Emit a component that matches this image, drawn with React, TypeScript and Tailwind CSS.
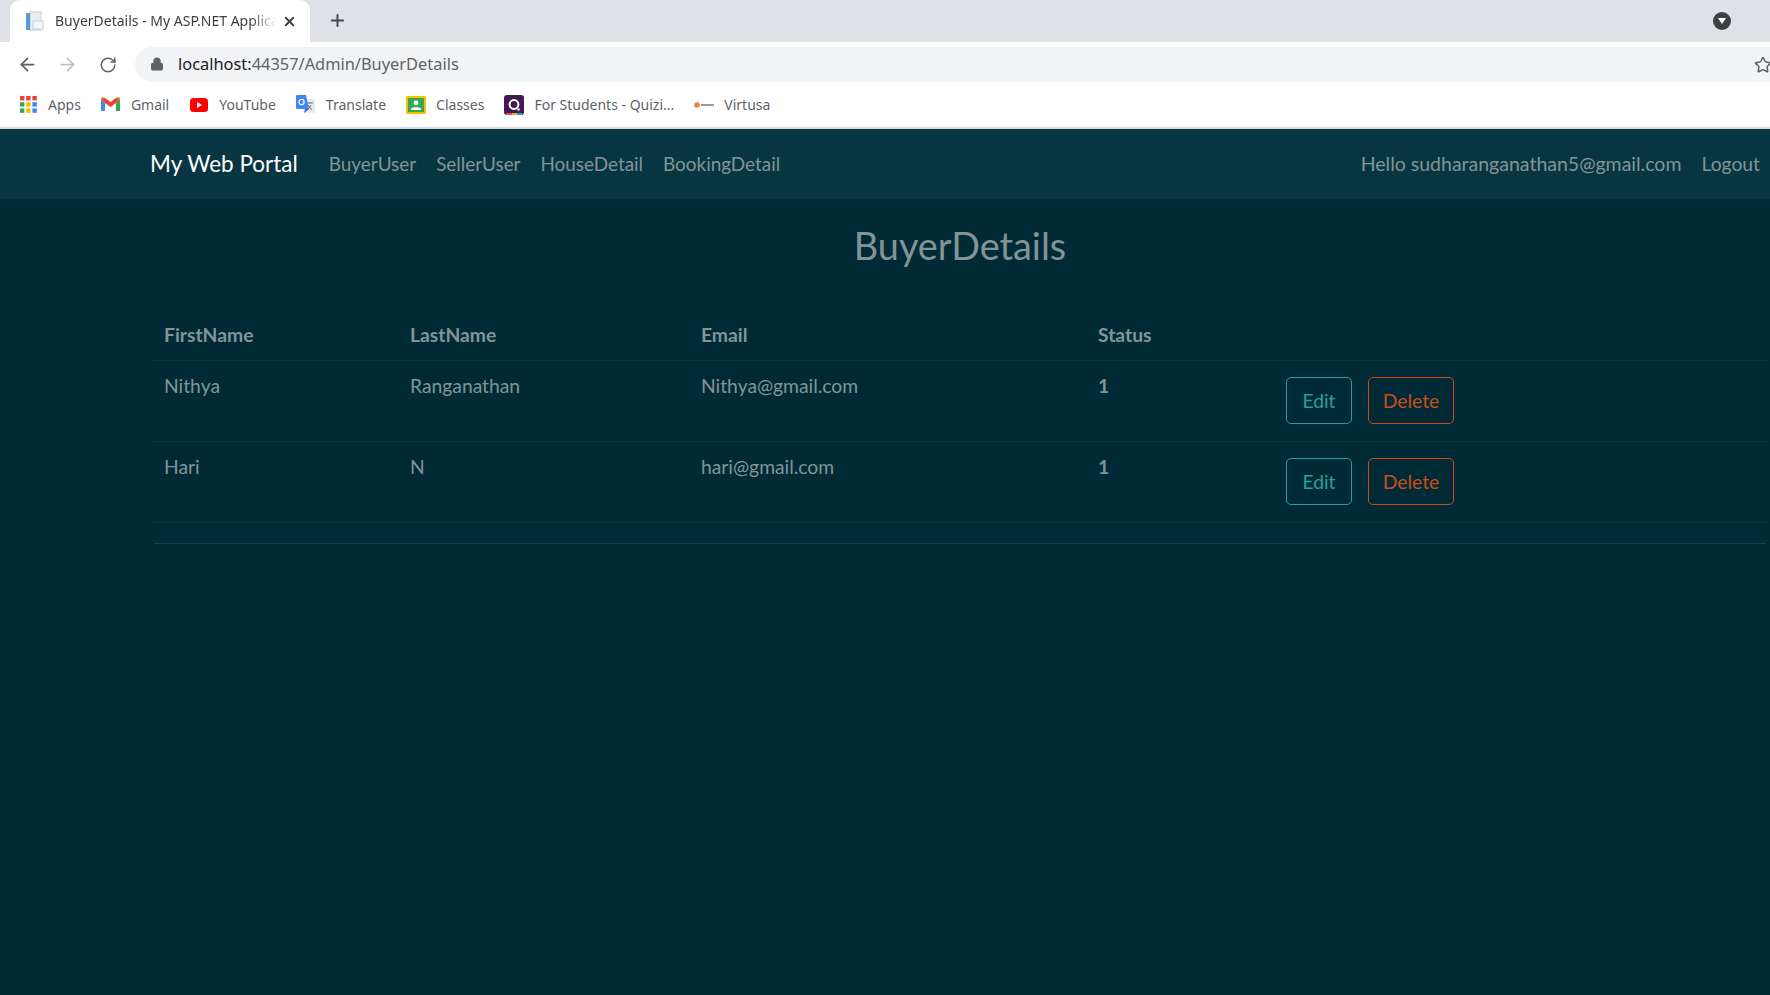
import { ArrowLeft, ArrowRight, Lock, Plus, RotateCw, Star, X } from 'lucide-react';

const navLinks = ['BuyerUser', 'SellerUser', 'HouseDetail', 'BookingDetail'];

const buyers = [
  { first: 'Nithya', last: 'Ranganathan', email: 'Nithya@gmail.com', status: 1 },
  { first: 'Hari', last: 'N', email: 'hari@gmail.com', status: 1 },
];

function AppsIcon() {
  const colors = ['#ea4335', '#ea4335', '#ea4335', '#34a853', '#fbbc04', '#4285f4', '#34a853', '#fbbc04', '#4285f4'];
  return (
    <svg width="17" height="17" viewBox="0 0 17 17">
      {colors.map((c, i) => (
        <rect key={i} x={(i % 3) * 6.2} y={Math.floor(i / 3) * 6.2} width="4.4" height="4.4" fill={c} />
      ))}
    </svg>
  );
}

function GmailIcon() {
  return (
    <svg width="19" height="15" viewBox="0 0 19 15">
      <path d="M0 2v12h4V6z" fill="#4285f4" />
      <path d="M19 2v12h-4V6z" fill="#34a853" />
      <path d="M0 2l4 4 5.5 4L15 6l4-4-1-2-3 1-5.5 4L4 1 1 0z" fill="#ea4335" />
      <path d="M15 1l4 1-1-2zM0 2l4-1-3-1z" fill="#fbbc04" />
    </svg>
  );
}

function YoutubeIcon() {
  return (
    <svg width="18" height="14" viewBox="0 0 18 14">
      <rect width="18" height="14" rx="3.5" fill="#f00" />
      <path d="M7 4l5 3-5 3z" fill="#fff" />
    </svg>
  );
}

function TranslateIcon() {
  return (
    <svg width="20" height="20" viewBox="0 0 20 20">
      <rect x="7" y="4" width="12" height="14" rx="1" fill="#e8eaed" />
      <path d="M11 8h6M14 7v1M12 15l3-5M12 10l4 5" stroke="#70757a" strokeWidth="1" fill="none" />
      <path d="M1 0h9l3 14H1a1 1 0 0 1-1-1V1a1 1 0 0 1 1-1z" fill="#4285f4" />
      <path d="M9 14l-1 4 5-4z" fill="#3367d6" />
      <circle cx="5.5" cy="7" r="2.6" fill="none" stroke="#fff" strokeWidth="1.2" />
    </svg>
  );
}

function ClassroomIcon() {
  return (
    <svg width="20" height="18" viewBox="0 0 20 18">
      <rect width="20" height="18" rx="1.5" fill="#fbbc04" />
      <rect x="2" y="2" width="16" height="14" fill="#34a853" />
      <circle cx="10" cy="7" r="2.4" fill="#fff" />
      <path d="M5 13c0-2.5 10-2.5 10 0v1H5z" fill="#fff" />
    </svg>
  );
}

function QuizizzIcon() {
  return (
    <svg width="20" height="20" viewBox="0 0 20 20">
      <rect width="20" height="20" rx="3" fill="#46194f" />
      <rect x="2" y="18" width="6" height="2" fill="#e5484d" />
      <rect x="8" y="18" width="5" height="2" fill="#f5a623" />
      <rect x="13" y="18" width="5" height="2" fill="#2d9cdb" />
      <circle cx="10" cy="9.5" r="4.4" fill="none" stroke="#fff" strokeWidth="2" />
      <circle cx="14.5" cy="14.5" r="1.2" fill="#fff" />
    </svg>
  );
}

function ExamlyIcon() {
  return (
    <svg width="20" height="8" viewBox="0 0 20 8">
      <circle cx="3" cy="4" r="2.8" fill="#f0823c" />
      <rect x="7" y="3" width="13" height="2" fill="#9a9a9a" />
    </svg>
  );
}

function Bookmark({ icon, label }: { icon: React.ReactNode; label: string }) {
  return (
    <div className="flex items-center gap-[10px]">
      <span className="flex w-5 justify-center">{icon}</span>
      <span>{label}</span>
    </div>
  );
}

function BrowserChrome() {
  return (
    <div className="font-['Noto_Sans',sans-serif] text-[#3c4043]">
      <div className="flex h-[42px] items-end bg-[#dee1e6] pl-[10px]">
        <div className="flex h-[42px] w-[300px] items-center rounded-t-[10px] bg-white pl-[15px] pr-[13px]">
          <svg width="20" height="20" viewBox="0 0 20 20" className="shrink-0">
            <rect x="5" y="1" width="11" height="18" fill="#e8edf3" stroke="#c4ccd6" />
            <rect x="1" y="2" width="4" height="17" fill="#5b9bd5" />
            <rect x="8" y="10" width="10" height="8" fill="#f5f7fa" stroke="#c4ccd6" />
          </svg>
          <span className="mb-[2px] ml-[10px] w-[222px] overflow-hidden whitespace-nowrap text-[14px] [mask-image:linear-gradient(to_right,black_88%,transparent)]">
            BuyerDetails - My ASP.NET Application
          </span>
          <X size={15} strokeWidth={3} className="ml-auto text-[#3c4043]" />
        </div>
        <Plus size={19} strokeWidth={2.5} className="mb-[12px] ml-[18px] text-[#45484c]" />
        <div className="mb-[12px] ml-auto mr-[39px] flex h-[18px] w-[18px] items-center justify-center rounded-full bg-[#3c4043]">
          <svg width="8" height="6" viewBox="0 0 8 6">
            <path d="M0 0h8L4 6z" fill="#fff" />
          </svg>
        </div>
      </div>

      <div className="flex h-[40px] bg-white pl-[17px] pt-[5px]">
        <div className="flex h-[35px] items-center">
          <ArrowLeft size={21} strokeWidth={2} className="text-[#5f6368]" />
          <ArrowRight size={21} strokeWidth={2} className="ml-[19px] text-[#bdc1c6]" />
          <RotateCw size={18} strokeWidth={2} className="ml-[21px] text-[#5f6368]" />
        </div>
        <div className="ml-[18px] flex h-[35px] flex-1 items-center justify-between rounded-l-full bg-[#f1f3f4] pl-[15px]">
          <div className="flex items-center">
            <Lock size={14} strokeWidth={2.5} fill="#5f6368" className="text-[#5f6368]" />
            <span className="ml-[14px] text-[16.4px] text-[#5f6368]">
              <span className="text-[#202124]">localhost:</span>44357/Admin/BuyerDetails
            </span>
          </div>
          <Star size={18} strokeWidth={2} className="mr-[-2px] text-[#5f6368]" />
        </div>
      </div>

      <div className="flex h-[47px] items-center gap-[20px] border-b-2 border-[#d9dbde] bg-white pl-[18px] text-[14px] text-[#5f6368]">
        <Bookmark icon={<AppsIcon />} label="Apps" />
        <Bookmark icon={<GmailIcon />} label="Gmail" />
        <Bookmark icon={<YoutubeIcon />} label="YouTube" />
        <Bookmark icon={<TranslateIcon />} label="Translate" />
        <Bookmark icon={<ClassroomIcon />} label="Classes" />
        <Bookmark icon={<QuizizzIcon />} label="For Students - Quizi..." />
        <Bookmark icon={<ExamlyIcon />} label="Virtusa" />
      </div>
    </div>
  );
}

export default function App() {
  return (
    <div className="flex h-[995px] w-[1770px] flex-col overflow-hidden bg-[#002b36] font-['Lato',sans-serif] text-[19.3px] text-[#839496]">
      <BrowserChrome />

      <nav className="flex h-[70px] shrink-0 items-center bg-[#073642] pl-[150px] pr-[10px]">
        <span className="mr-[31px] text-[22.5px] text-white">My Web Portal</span>
        <div className="flex gap-[20px] text-[18.9px]">
          {navLinks.map((link) => (
            <span key={link}>{link}</span>
          ))}
        </div>
        <span className="ml-auto text-[19.5px]">Hello sudharanganathan5@gmail.com</span>
        <span className="ml-[20px]">Logout</span>
      </nav>

      <main className="pl-[152px] pr-[4px]">
        <h2 className="ml-[2px] mt-[20px] text-center text-[37.8px] leading-[54px]">BuyerDetails</h2>

        <table className="mt-[43px] w-full table-fixed border-collapse">
          <thead>
            <tr className="border-b border-[#073642] text-left">
              <th className="w-[246px] px-3 pb-[10px] pt-[5px] font-bold">FirstName</th>
              <th className="w-[291px] px-3 pb-[10px] pt-[5px] font-bold">LastName</th>
              <th className="w-[397px] px-3 pb-[10px] pt-[5px] font-bold">Email</th>
              <th className="w-[188px] px-3 pb-[10px] pt-[5px] font-bold">Status</th>
              <th className="px-3" />
            </tr>
          </thead>
          <tbody>
            {buyers.map((buyer) => (
              <tr key={buyer.email} className="border-b border-[#073642] align-top">
                <td className="px-3 pt-[11px]">{buyer.first}</td>
                <td className="px-3 pt-[11px]">{buyer.last}</td>
                <td className="px-3 pt-[11px]">{buyer.email}</td>
                <td className="px-3 pt-[11px] font-bold">{buyer.status}</td>
                <td className="px-3 pb-[17px] pt-[16px]">
                  <div className="flex gap-4">
                    <button className="h-[47px] w-[66px] rounded-[5px] border border-[#2aa198] pt-[2px] text-[#2aa198]">Edit</button>
                    <button className="h-[47px] w-[86px] rounded-[5px] border border-[#cb4b16] pt-[2px] text-[#cb4b16]">Delete</button>
                  </div>
                </td>
              </tr>
            ))}
          </tbody>
        </table>

        <hr className="ml-[2px] mt-[20px] border-[#134350]" />
      </main>
    </div>
  );
}
